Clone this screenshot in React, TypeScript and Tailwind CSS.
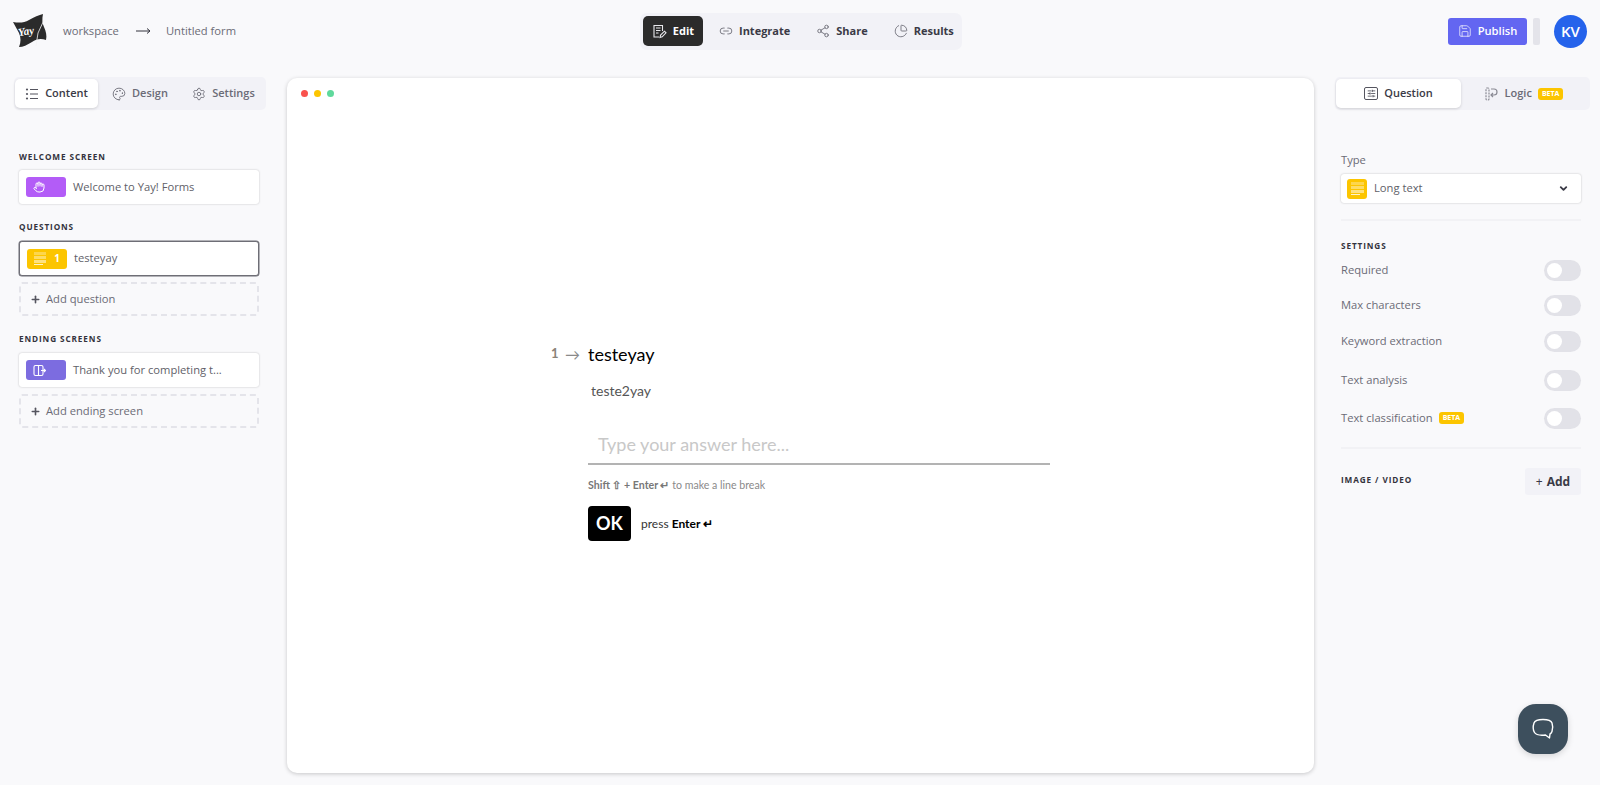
import { JSX, ReactNode } from 'react';
import { Link2, Palette, PieChart, Plus, Save, Settings, Hand, ChevronDown, Share2, SlidersHorizontal } from 'lucide-react';

const uiFont = "font-['Open_Sans','Noto_Sans',sans-serif]";
const formFont = "font-['Lato',sans-serif]";

const LinesIcon = ({ className = '' }: { className?: string }): JSX.Element => (
	<div className={`flex flex-col gap-[1px] ${className}`}>
		<div className="h-[3px] bg-white/30"></div>
		<div className="h-[3px] bg-white/40"></div>
		<div className="h-[3px] bg-white/50"></div>
		<div className="h-[1px] w-3/4 bg-white/80"></div>
	</div>
);

const Logo = (): JSX.Element => (
	<svg width="36" height="34" viewBox="0 0 36 34">
		<path d="M1 8 C7 9 12 9 17 6 C22 3 27 1 31 0 C30 5 30 9 32 13 C34 17 35 22 34 26 C29 24 24 25 20 28 C15 31 11 33 7 33 C9 28 9 24 7 19 C5 15 3 12 1 8 Z" fill="#2b2b2b" />
		<text x="6" y="21" fill="#ffffff" fontSize="11" fontStyle="italic" fontWeight="700" fontFamily="Liberation Serif, serif" transform="rotate(-10 14 18)">Yay</text>
		<path d="M32 6 L26 19 M26 19 L24 32" stroke="#f4f4f4" strokeWidth="0.8" fill="none" />
	</svg>
);

const EditIcon = (): JSX.Element => (
	<svg width="15" height="15" viewBox="0 0 15 15" fill="none" stroke="#e8e8ec" strokeWidth="1.1">
		<path d="M10.5 7 V1.5 H2 V13 H7" />
		<path d="M4 4 H8.5 M4 6.5 H8.5 M4 9 H6.5" />
		<path d="M8 13.5 L8.6 11 L12.5 7.2 L14 8.8 L10.2 12.8 Z" />
	</svg>
);

const ContentIcon = (): JSX.Element => (
	<svg width="14" height="14" viewBox="0 0 14 14" fill="none" stroke="#55555f" strokeWidth="1.2">
		<path d="M5 2.5 H13 M5 7 H13 M5 11.5 H13" />
		<circle cx="2" cy="2.5" r="1.1" fill="#55555f" stroke="none" />
		<circle cx="2" cy="7" r="1.1" fill="#55555f" stroke="none" />
		<circle cx="2" cy="11.5" r="1.1" fill="#55555f" stroke="none" />
	</svg>
);

const TopTab = ({ icon, label, active = false, className = '' }: { icon: ReactNode; label: string; active?: boolean; className?: string }): JSX.Element => (
	<div className={`flex h-[30px] items-center gap-[6px] rounded-[5px] text-[11px] font-bold ${active ? 'bg-[#2b2b2b] text-white' : 'text-[#3a3a46]'} ${className}`}>
		{icon}
		<span>{label}</span>
	</div>
);

const SideTab = ({ icon, label, active = false, className = '' }: { icon: ReactNode; label: ReactNode; active?: boolean; className?: string }): JSX.Element => (
	<div className={`flex h-[29px] items-center justify-center gap-[6px] rounded-[5px] text-[11px] font-semibold ${active ? 'bg-white text-[#3a3a46] shadow-[0_1px_3px_rgba(0,0,0,0.15)]' : 'text-[#6b6b76]'} ${className}`}>
		{icon}
		{label}
	</div>
);

const SectionLabel = ({ children, className = '' }: { children: ReactNode; className?: string }): JSX.Element => (
	<div className={`text-[8.2px] leading-[12px] font-bold tracking-[0.9px] text-[#33333d] uppercase ${className}`}>
		{children}
	</div>
);

const ItemCard = ({ color, icon, num, title, selected = false }: { color: string; icon: ReactNode; num?: string; title: string; selected?: boolean }): JSX.Element => (
	<div className={`flex w-[240px] items-center rounded-[3px] bg-white pl-[7px] ${selected ? 'h-[35px] border border-[#6e6e76] shadow-[0_0_0_0.5px_#6e6e76]' : 'h-[34px] shadow-[0_0_2px_rgba(0,0,0,0.25)]'}`}>
		<div className={`flex h-[20px] w-[40px] shrink-0 items-center justify-between rounded-[3px] pr-[7px] pl-[7px] ${color}`}>
			{icon}
			{num && <span className="text-[10px] font-bold text-white">{num}</span>}
		</div>
		<span className="ml-[7px] text-[11.2px] text-[#5f5f69]">{title}</span>
	</div>
);

const AddRow = ({ label }: { label: string }): JSX.Element => (
	<div className="flex h-[34px] w-[240px] items-center gap-[5px] rounded-[3px] border-2 border-dashed border-[#e4e4ea] pl-[9px] text-[11.2px] text-[#6b6b76]">
		<Plus size={11} strokeWidth={3.5} className="text-[#55555f]" />
		{label}
	</div>
);

const ToggleRow = ({ label, beta = false, className = '' }: { label: string; beta?: boolean; className?: string }): JSX.Element => (
	<div className={`flex h-[22px] items-center justify-between ${className}`}>
		<div className="flex items-center gap-[6px] text-[11.2px] text-[#6b6b76]">
			{label}
			{beta && <BetaBadge />}
		</div>
		<div className="flex h-[21px] w-[37px] items-center rounded-full bg-[#e2e2e8] pl-[3px]">
			<div className="h-[15px] w-[15px] rounded-full bg-white"></div>
		</div>
	</div>
);

const BetaBadge = (): JSX.Element => (
	<span className="rounded-[3px] bg-[#fcc500] px-[4px] text-[7px] leading-[12px] font-bold text-white">BETA</span>
);

export default function App(): JSX.Element {
	return (
		<div className={`flex h-[785px] w-[1600px] flex-col overflow-hidden bg-[#f9f9fb] ${uiFont}`}>
			{/* Header */}
			<header className="grid h-[62px] grid-cols-[1fr_auto_1fr] items-center pr-[13px] pl-[12px]">
				<div className="flex items-center text-[11.2px] text-[#6b6b76]">
					<Logo />
					<span className="ml-[15px]">workspace</span>
					<svg width="15" height="8" viewBox="0 0 15 8" fill="none" stroke="#33333d" strokeWidth="1" className="mr-[15px] ml-[17px]">
						<path d="M0 4 H14 M11 1.5 L14 4 L11 6.5" />
					</svg>
					<span>Untitled form</span>
				</div>
				<div className="ml-[3px] flex h-[37px] w-[322px] items-center rounded-[7px] bg-[#f2f2f7] px-[3px]">
					<TopTab active className="w-[60px] justify-center" icon={<EditIcon />} label="Edit" />
					<TopTab className="ml-[16px]" icon={<Link2 size={14} strokeWidth={1.5} className="text-[#6b6b76]" />} label="Integrate" />
					<TopTab className="ml-[26px]" icon={<Share2 size={14} strokeWidth={1.5} className="text-[#6b6b76]" />} label="Share" />
					<TopTab className="ml-[26px]" icon={<PieChart size={14} strokeWidth={1.5} className="text-[#6b6b76]" />} label="Results" />
				</div>
				<div className="flex items-center justify-end">
					<div className="flex h-[27px] w-[79px] items-center justify-center gap-[6px] rounded-[3px] bg-[#6366f1] text-[11.2px] font-semibold text-white">
						<Save size={14} strokeWidth={1.5} className="text-white/80" />
						Publish
					</div>
					<div className="mr-[14px] ml-[6px] h-[27px] w-[7px] rounded-[2px] bg-[#e4e4ea]"></div>
					<div className="flex h-[33px] w-[33px] items-center justify-center rounded-full bg-[#2563eb] text-[15px] font-semibold text-white">
						KV
					</div>
				</div>
			</header>

			<div className="flex min-h-0 flex-1 pb-[12px]">
				{/* Left panel */}
				<aside className="flex w-[287px] shrink-0 flex-col pt-[15px] pl-[14px]">
					<div className="flex h-[33px] w-[252px] items-center rounded-[5px] bg-[#f2f2f7] px-[1px]">
						<SideTab active className="w-[83px]" icon={<ContentIcon />} label="Content" />
						<SideTab className="w-[84px]" icon={<Palette size={14} strokeWidth={1.5} />} label="Design" />
						<SideTab className="w-[83px]" icon={<Settings size={14} strokeWidth={1.5} />} label="Settings" />
					</div>
					<div className="flex flex-col pl-[5px]">
						<SectionLabel className="mt-[41px] mb-[7px]">Welcome screen</SectionLabel>
						<ItemCard color="bg-[#b35cf7]" icon={<Hand size={12} strokeWidth={2} className="text-white" />} title="Welcome to Yay! Forms" />
						<SectionLabel className="mt-[17px] mb-[8px]">Questions</SectionLabel>
						<ItemCard selected color="bg-[#fcc500]" icon={<LinesIcon className="w-[12px]" />} num="1" title="testeyay" />
						<div className="mt-[6px]"><AddRow label="Add question" /></div>
						<SectionLabel className="mt-[17px] mb-[8px]">Ending screens</SectionLabel>
						<ItemCard
							color="bg-[#7c6ce0]"
							icon={
								<svg width="13" height="13" viewBox="0 0 13 13" fill="none" stroke="#ffffff" strokeWidth="1.1">
									<rect x="1" y="1.5" width="9" height="10" rx="1.5" />
									<path d="M5.5 1.5 V11.5 M8 6.5 H12.5 M11 5 L12.5 6.5 L11 8" />
								</svg>
							}
							title="Thank you for completing t..."
						/>
						<div className="mt-[7px]"><AddRow label="Add ending screen" /></div>
					</div>
				</aside>

				{/* Canvas */}
				<main className="relative mt-[16px] flex w-[1027px] shrink-0 flex-col items-center rounded-[10px] bg-white pt-[264px] shadow-[0_1px_4px_rgba(0,0,0,0.2)]">
					<div className="absolute top-[12px] left-[14px] flex gap-[6px]">
						<div className="h-[7px] w-[7px] rounded-full bg-[#f9524d]"></div>
						<div className="h-[7px] w-[7px] rounded-full bg-[#fcc500]"></div>
						<div className="h-[7px] w-[7px] rounded-full bg-[#5fd99c]"></div>
					</div>
					<div className={`w-[499px] ${formFont}`}>
						<div className="flex items-center">
							<span className="w-[13px] text-[13px] font-bold text-[#8a8378]">1</span>
							<span className="ml-[1px] w-[23px] text-[15px] leading-none text-[#8a8a8a]">→</span>
							<span className="text-[18px] leading-[24px] text-black">testeyay</span>
						</div>
						<div className="mt-[16px] ml-[3px] pl-[37px] text-[14px] leading-[18px] text-[#555555]">teste2yay</div>
						<div className="mt-[32px] ml-[37px] w-[462px] border-b-2 border-[#b3b3b3] pb-[7px] pl-[10px] text-[18px] leading-[24px] text-[#c8c8c8]">
							Type your answer here...
						</div>
						<div className="mt-[13px] ml-[37px] text-[10.6px] leading-[14px] text-[#8a8a8a]">
							<b className="text-[#777777]">Shift ⇧ + Enter ↵</b> to make a line break
						</div>
						<div className="mt-[14px] ml-[37px] flex items-center">
							<div className="flex h-[35px] w-[43px] items-center justify-center rounded-[4px] bg-black text-[18px] font-bold text-white">
								OK
							</div>
							<span className="ml-[10px] text-[12px] text-[#333333]">press <b className="text-black">Enter ↵</b></span>
						</div>
					</div>
				</main>

				{/* Right panel */}
				<aside className="flex min-w-0 flex-1 flex-col pt-[15px] pr-[10px] pl-[21px]">
					<div className="flex h-[33px] w-[255px] items-center rounded-[5px] bg-[#f2f2f7] px-[1px]">
						<SideTab active className="w-[125px]" icon={<div className="flex h-[13px] w-[14px] items-center justify-center rounded-[2px] border border-[#55555f]"><SlidersHorizontal size={9} strokeWidth={2} /></div>} label="Question" />
						<SideTab
							className="w-[126px]"
							icon={
								<svg width="14" height="14" viewBox="0 0 14 14" fill="none" stroke="#8a8a94" strokeWidth="1.2">
									<rect x="1" y="1" width="3" height="12" rx="1" strokeDasharray="2 1" />
									<path d="M6 2 H9 C13 2 13 8 9 8 H6 M8 6 L6 8 L8 10" />
								</svg>
							}
							label={<>Logic <BetaBadge /></>}
						/>
					</div>
					<div className="box-content flex w-[240px] flex-col pl-[6px]">
						<div className="mt-[42px] text-[11.2px] leading-[16px] text-[#6b6b76]">Type</div>
						<div className="mt-[6px] flex h-[29px] items-center rounded-[3px] bg-white pr-[12px] pl-[6px] shadow-[0_0_2px_rgba(0,0,0,0.25)]">
							<div className="flex h-[20px] w-[20px] items-center justify-center rounded-[3px] bg-[#fcc500]">
								<LinesIcon className="w-[13px]" />
							</div>
							<span className="ml-[7px] flex-1 text-[11.2px] text-[#5f5f69]">Long text</span>
							<ChevronDown size={11} strokeWidth={4} className="text-[#3a3a46]" />
						</div>
						<div className="mt-[16px] h-[2px] bg-[#f2f2f5]"></div>
						<SectionLabel className="mt-[19px]">Settings</SectionLabel>
						<ToggleRow label="Required" className="mt-[7px]" />
						<ToggleRow label="Max characters" className="mt-[13px]" />
						<ToggleRow label="Keyword extraction" className="mt-[14px]" />
						<ToggleRow label="Text analysis" className="mt-[17px]" />
						<ToggleRow label="Text classification" beta className="mt-[16px]" />
						<div className="mt-[18px] h-[2px] bg-[#f2f2f5]"></div>
						<div className="mt-[19px] flex items-center justify-between">
							<SectionLabel className="pb-[4px]">Image / Video</SectionLabel>
							<div className="flex h-[27px] w-[56px] items-center justify-center rounded-[3px] bg-[#f2f2f7] text-[12px] font-bold text-[#3a3a46]">
								<span className="mr-[4px] font-normal">+</span>Add
							</div>
						</div>
					</div>
				</aside>
			</div>

			{/* Chat bubble */}
			<div className="absolute top-[704px] left-[1518px] flex h-[50px] w-[50px] items-center justify-center rounded-[18px] bg-[#3d4f5d] shadow-[0_2px_6px_rgba(0,0,0,0.15)]">
				<svg width="24" height="22" viewBox="0 0 24 22" fill="none" stroke="#ffffff" strokeWidth="1.4" strokeLinejoin="round">
					<path d="M3 5 C4 2 7 1.5 12 1.5 C17 1.5 20 2 21 5 C22 8 22 11 21 13.5 C20.5 15 20 15.5 19 16 L18.5 20 L14.5 17 C10 17.5 5 17 3.5 14.5 C2 12 2 8 3 5 Z" />
				</svg>
			</div>
		</div>
	);
}
